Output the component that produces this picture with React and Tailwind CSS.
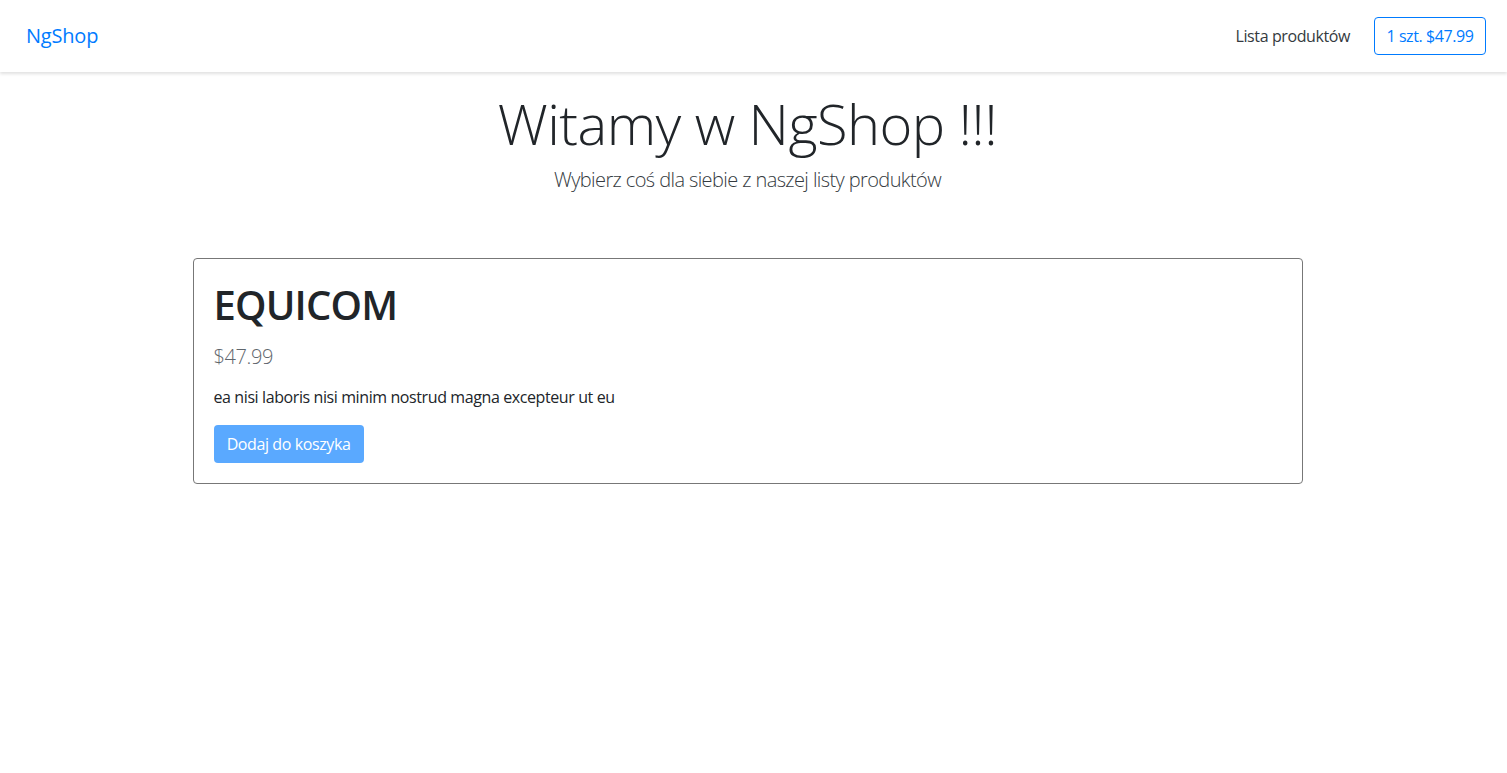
import React from 'react';

export default function App() {
  return (
    <div className="min-h-[773px] bg-white text-[#212529] tracking-[-0.025em]" style={{ fontFamily: '"Open Sans", "Noto Sans", sans-serif' }}>
      <nav className="h-[72px] flex items-center justify-between pl-[26px] pr-[21px] shadow-[0_2px_3px_rgba(0,0,0,0.12)]">
        <a className="text-[20px] text-[#007bff] tracking-[-0.01em]">NgShop</a>
        <div className="flex items-center gap-6">
          <a className="text-[16px] text-[#343a40]">Lista produktów</a>
          <button className="h-[38px] w-[112px] border border-[#007bff] rounded text-[16px] text-[#007bff]">
            1 szt. $47.99
          </button>
        </div>
      </nav>

      <div className="pr-[12px]">
        <div className="text-center pt-[18px]">
          <h1 className="text-[56px] font-light leading-[1.2] text-[#212529] tracking-[-0.01em]">Witamy w NgShop !!!</h1>
          <p className="text-[20px] font-light leading-[1.5] text-[#343a40] mt-[8px] tracking-[-0.03em]">
            Wybierz coś dla siebie z naszej listy produktów
          </p>
        </div>

        <div className="w-[1110px] mx-auto mt-[63px]">
          <div className="border border-[#777] rounded px-5 pt-[22px] pb-[20px]">
            <h2 className="text-[40px] font-semibold leading-[1.2] tracking-[-0.02em]">EQUICOM</h2>
            <p className="text-[20px] font-light leading-[1.5] text-[#5f666d] mt-[13px] mb-[13px]">$47.99</p>
            <p className="text-[16px] leading-[1.5] mb-4">ea nisi laboris nisi minim nostrud magna excepteur ut eu</p>
            <button className="h-[38px] w-[150px] rounded bg-[#5aa9ff] text-white text-[16px]">Dodaj do koszyka</button>
          </div>
        </div>
      </div>
    </div>
  );
}
